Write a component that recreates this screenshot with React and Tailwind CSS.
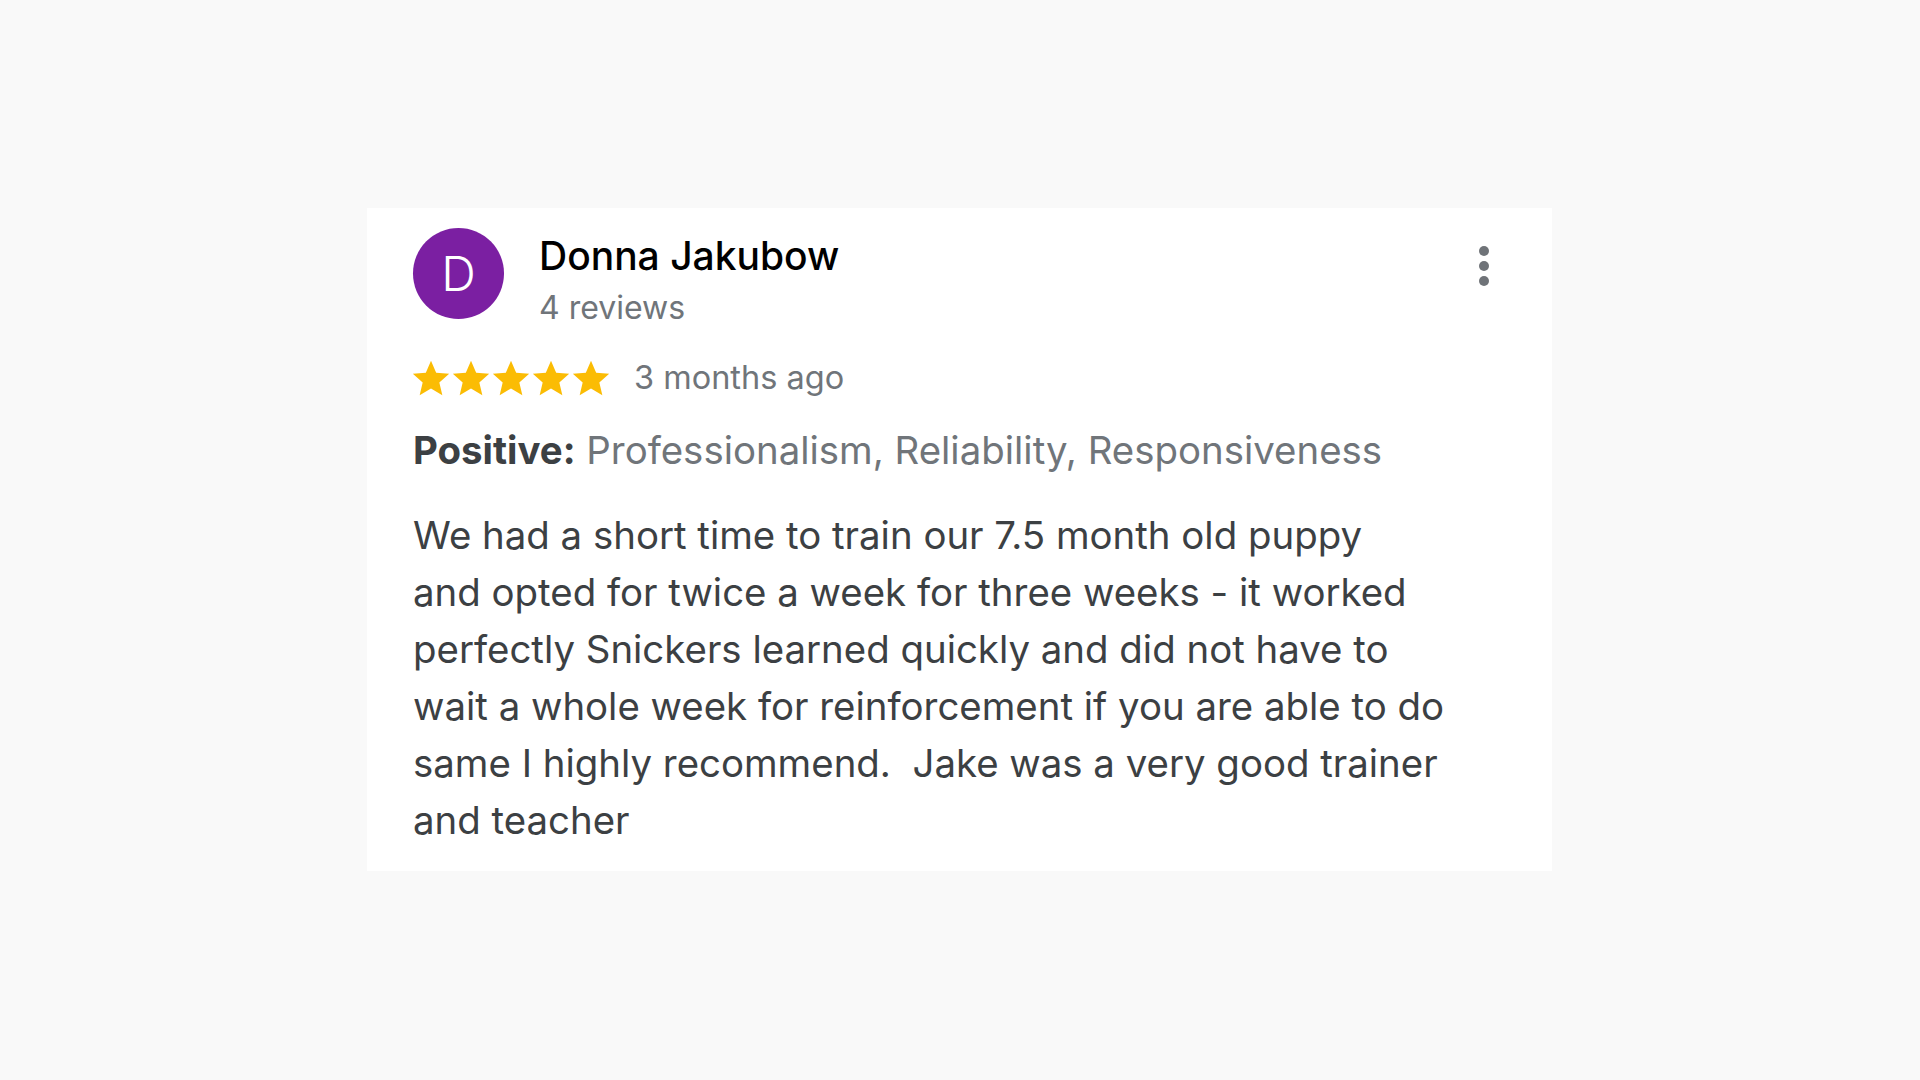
import React from "react";

const Star = () => (
    <svg viewBox="0 0 24 24" className="h-[40px] w-[40px] shrink-0" fill="#fbbc04">
        <path d="M12 1.6l3.1 7.2 7.8.7-5.9 5.2 1.8 7.7L12 18.3l-6.8 4.1L7 14.7 1.1 9.5l7.8-.7z" />
    </svg>
);

const MoreDots = () => (
    <div className="flex flex-col items-center gap-[5px] pt-[18px]">
        <span className="h-[10px] w-[10px] rounded-full bg-[#6f7378]" />
        <span className="h-[10px] w-[10px] rounded-full bg-[#6f7378]" />
        <span className="h-[10px] w-[10px] rounded-full bg-[#6f7378]" />
    </div>
);

// line breaks follow the original screenshot
const reviewText = [
    "We had a short time to train our 7.5 month old puppy",
    "and opted for twice a week for three weeks - it worked",
    "perfectly Snickers learned quickly and did not have to",
    "wait a whole week for reinforcement if you are able to do",
    "same I highly recommend.  Jake was a very good trainer",
    "and teacher",
].join("\n");

export default function App() {
    return (
        <div className="min-h-screen w-full bg-[#f9f9f9] pt-[208px] pl-[367px] font-['Inter','Liberation_Sans',sans-serif]">
            <div className="w-[1185px] h-[663px] bg-white pl-[46px] pr-[63px] pt-[20px]">
                {/* Header */}
                <div className="flex items-start justify-between">
                    <div className="flex items-start gap-[35px]">
                        <div className="h-[91px] w-[91px] rounded-full bg-[#7b1fa2] flex items-center justify-center text-white text-[48px] font-light leading-none">
                            D
                        </div>
                        <div className="pt-[5px]">
                            <p className="text-[39px] leading-[46px] font-medium text-black">Donna Jakubow</p>
                            <p className="mt-[9px] text-[32px] leading-[40px] text-[#70757a]">4 reviews</p>
                        </div>
                    </div>
                    <MoreDots />
                </div>

                {/* Rating */}
                <div className="mt-[30px] flex items-center h-[40px]">
                    <div className="flex items-center -ml-[2px]">
                        <Star />
                        <Star />
                        <Star />
                        <Star />
                        <Star />
                    </div>
                    <span className="ml-[23px] text-[32.5px] text-[#70757a]">3 months ago</span>
                </div>

                {/* Highlights */}
                <p className="mt-[24px] text-[38.4px] leading-[57px] text-[#70757a]">
                    <span className="font-bold text-[#3c4043]">Positive:</span> Professionalism, Reliability, Responsiveness
                </p>

                {/* Review body */}
                <p className="mt-[28px] text-[38.4px] leading-[57px] text-[#3c4043] whitespace-pre-wrap">
                    {reviewText}
                </p>
            </div>
        </div>
    );
}
